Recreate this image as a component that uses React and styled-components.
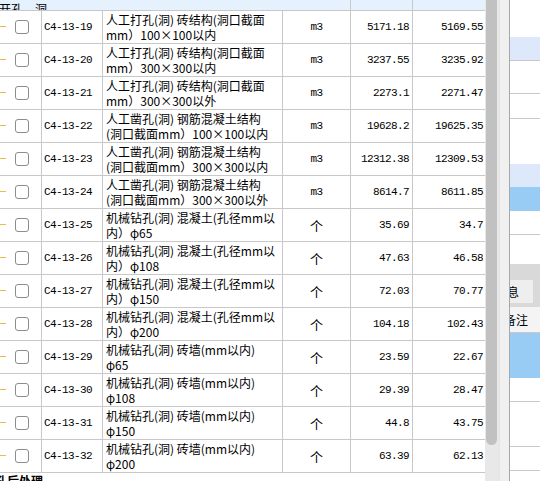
import React from "react";
import styled, { createGlobalStyle } from "styled-components";

const GlobalStyle = createGlobalStyle`
  html, body {
    margin: 0;
    padding: 0;
    background: #ffffff;
    overflow: hidden;
  }
  * {
    box-sizing: border-box;
  }
`;

const rows = [
  ["C4-13-19", "人工打孔(洞) 砖结构(洞口截面", "mm）100×100以内", "m3", "5171.18", "5169.55"],
  ["C4-13-20", "人工打孔(洞) 砖结构(洞口截面", "mm）300×300以内", "m3", "3237.55", "3235.92"],
  ["C4-13-21", "人工打孔(洞) 砖结构(洞口截面", "mm）300×300以外", "m3", "2273.1", "2271.47"],
  ["C4-13-22", "人工凿孔(洞) 钢筋混凝土结构", "(洞口截面mm）100×100以内", "m3", "19628.2", "19625.35"],
  ["C4-13-23", "人工凿孔(洞) 钢筋混凝土结构", "(洞口截面mm）300×300以内", "m3", "12312.38", "12309.53"],
  ["C4-13-24", "人工凿孔(洞) 钢筋混凝土结构", "(洞口截面mm）300×300以外", "m3", "8614.7", "8611.85"],
  ["C4-13-25", "机械钻孔(洞) 混凝土(孔径mm以", "内）φ65", "个", "35.69", "34.7"],
  ["C4-13-26", "机械钻孔(洞) 混凝土(孔径mm以", "内）φ108", "个", "47.63", "46.58"],
  ["C4-13-27", "机械钻孔(洞) 混凝土(孔径mm以", "内）φ150", "个", "72.03", "70.77"],
  ["C4-13-28", "机械钻孔(洞) 混凝土(孔径mm以", "内）φ200", "个", "104.18", "102.43"],
  ["C4-13-29", "机械钻孔(洞) 砖墙(mm以内)", "φ65", "个", "23.59", "22.67"],
  ["C4-13-30", "机械钻孔(洞) 砖墙(mm以内)", "φ108", "个", "29.39", "28.47"],
  ["C4-13-31", "机械钻孔(洞) 砖墙(mm以内)", "φ150", "个", "44.8", "43.75"],
  ["C4-13-32", "机械钻孔(洞) 砖墙(mm以内)", "φ200", "个", "63.39", "62.13"],
];

const sideRows = [
  { h: 37, bg: "#ffffff", line: false },
  { h: 24, bg: "#dde9fb", line: true },
  { h: 33, bg: "#ffffff", line: true },
  { h: 25, bg: "#ffffff", line: true },
  { h: 45, bg: "#ffffff", line: false },
  { h: 23, bg: "#dde9fb", line: false },
  { h: 24, bg: "#99ccf5", line: false },
  { h: 24, bg: "#ffffff", line: true },
  { h: 29, bg: "#ffffff", line: false },
];

const detailRows = [
  { h: 45, bg: "#99ccf5", line: false },
  { h: 24, bg: "#ffffff", line: true },
  { h: 45, bg: "#ffffff", line: true },
  { h: 24, bg: "#ffffff", line: true },
  { h: 20, bg: "#ffffff", line: false },
];

function App() {
  return (
    <>
      <GlobalStyle />
      <Screen>
        <LeftPane>
          <Grid>
            <GroupRow>
              <GroupCell>
                <GroupText>开孔、洞</GroupText>
              </GroupCell>
              <GroupCell />
              <GroupCell />
            </GroupRow>
            {rows.map(([code, name1, name2, unit, price, base]) => (
              <Row key={code}>
                <MarkCell>
                  <TreeDash />
                  <CheckBox />
                </MarkCell>
                <CodeCell>{code}</CodeCell>
                <NameCell>
                  <NameLine>{name1}</NameLine>
                  <NameLine>{name2}</NameLine>
                </NameCell>
                <UnitCell $cjk={unit === "个"}>{unit}</UnitCell>
                <NumCell>{price}</NumCell>
                <NumCell $last>{base}</NumCell>
              </Row>
            ))}
          </Grid>
          <Footer>孔后处理</Footer>
        </LeftPane>

        <ScrollTrack>
          <ScrollThumb />
        </ScrollTrack>

        <Splitter />

        <SidePanel>
          {sideRows.map((r, i) => (
            <SideRow key={i} $h={r.h} $bg={r.bg} $line={r.line} />
          ))}
          <TabStrip>
            <Tab>
              <TabLabel>息</TabLabel>
            </Tab>
          </TabStrip>
          <DetailHeader>备注</DetailHeader>
          {detailRows.map((r, i) => (
            <SideRow key={i} $h={r.h} $bg={r.bg} $line={r.line} />
          ))}
        </SidePanel>
      </Screen>
    </>
  );
}

export default App;

const Screen = styled.div`
  display: flex;
  width: 540px;
  height: 481px;
  overflow: hidden;
  background: #ffffff;
`;

const LeftPane = styled.div`
  display: flex;
  flex-direction: column;
  width: 485px;
  flex: none;
`;

const Grid = styled.div`
  display: flex;
  flex-direction: column;
`;

const GroupRow = styled.div`
  display: grid;
  grid-template-columns: 351px 62px 72px;
  height: 11px;
  background: #e5f1fc;
  border-bottom: 1px solid #c8c8c8;
`;

const GroupCell = styled.div`
  display: flex;
  align-items: flex-end;
  overflow: hidden;
  border-right: 1px solid #c8c8c8;

  &:last-child {
    border-right: none;
  }
`;

const GroupText = styled.span`
  font-family: "Noto Sans CJK SC", sans-serif;
  font-size: 12px;
  line-height: 15px;
  margin-bottom: -6px;
  margin-left: -1px;
  color: #000000;
  white-space: nowrap;
`;

const Row = styled.div`
  display: grid;
  grid-template-columns: 42px 61px 180px 68px 62px 72px;
  height: 33px;
  border-bottom: 1px solid #c8c8c8;
  background: #ffffff;
`;

const Cell = styled.div`
  display: flex;
  align-items: center;
  overflow: hidden;
  border-right: 1px solid #c8c8c8;
  color: #000000;
`;

const MarkCell = styled(Cell)`
  position: relative;
  justify-content: center;
  padding-left: 3px;
`;

const TreeDash = styled.span`
  position: absolute;
  left: 0;
  top: 15px;
  width: 6px;
  height: 1px;
  background: #f2b450;
`;

const CheckBox = styled.span`
  width: 14px;
  height: 14px;
  border: 1px solid #8c8c8c;
  border-radius: 3px;
  background: #ffffff;
`;

const CodeCell = styled(Cell)`
  padding-left: 2px;
  font-family: "Liberation Mono", monospace;
  font-size: 11px;
  letter-spacing: -0.6px;
`;

const NameCell = styled(Cell)`
  flex-direction: column;
  align-items: flex-start;
  justify-content: center;
  padding-left: 3px;
  font-family: "Noto Sans CJK SC", sans-serif;
  font-size: 12px;
`;

const NameLine = styled.span`
  display: block;
  height: 15px;
  line-height: 15px;
  white-space: nowrap;
`;

const UnitCell = styled(Cell)`
  justify-content: center;
  font-family: ${(p) =>
    p.$cjk ? '"Noto Sans CJK SC", sans-serif' : '"Liberation Mono", monospace'};
  font-size: ${(p) => (p.$cjk ? "13px" : "11px")};
  letter-spacing: ${(p) => (p.$cjk ? "0" : "-0.6px")};
`;

const NumCell = styled(Cell)`
  justify-content: flex-end;
  padding-right: ${(p) => (p.$last ? "2px" : "3px")};
  font-family: "Liberation Mono", monospace;
  font-size: 11px;
  letter-spacing: -0.6px;
  border-right: ${(p) => (p.$last ? "none" : "1px solid #c8c8c8")};
`;

const Footer = styled.div`
  height: 8px;
  overflow: hidden;
  margin-left: -5px;
  padding-top: 1px;
  font-family: "Noto Sans CJK SC", sans-serif;
  font-size: 12px;
  font-weight: bold;
  line-height: 14px;
  color: #000000;
  white-space: nowrap;
`;

const ScrollTrack = styled.div`
  width: 14px;
  flex: none;
  height: 100%;
  background: #e8e8e8;
  padding: 0 2px 0 1px;
`;

const ScrollThumb = styled.div`
  height: 445px;
  background: #c1c1c1;
  border-radius: 0 0 6px 6px;
`;

const Splitter = styled.div`
  width: 11px;
  flex: none;
  height: 100%;
  background: #f0f0f0;
  border-left: 1px solid #e4e4e4;
  border-right: 1px solid #a8a8a8;
`;

const SidePanel = styled.div`
  flex: 1;
  display: flex;
  flex-direction: column;
  overflow: hidden;
  background: #ffffff;
`;

const SideRow = styled.div`
  flex: none;
  height: ${(p) => p.$h}px;
  background: ${(p) => p.$bg};
  border-bottom: ${(p) => (p.$line ? "1px solid #c8c8c8" : "none")};
`;

const TabStrip = styled.div`
  flex: none;
  height: 43px;
  display: flex;
  align-items: flex-end;
  background: #d9d9d9;
  padding-bottom: 4px;
`;

const Tab = styled.div`
  width: 23px;
  height: 23px;
  display: flex;
  align-items: center;
  overflow: hidden;
  background: #eeeeee;
`;

const TabLabel = styled.span`
  margin-left: -3px;
  font-family: "Noto Sans CJK SC", sans-serif;
  font-size: 12px;
  color: #000000;
  white-space: nowrap;
`;

const DetailHeader = styled.div`
  flex: none;
  height: 26px;
  display: flex;
  align-items: center;
  margin-left: -6px;
  background: #f4f4f4;
  border-bottom: 1px solid #c8c8c8;
  font-family: "Noto Sans CJK SC", sans-serif;
  font-size: 12px;
  color: #000000;
  white-space: nowrap;
`;
